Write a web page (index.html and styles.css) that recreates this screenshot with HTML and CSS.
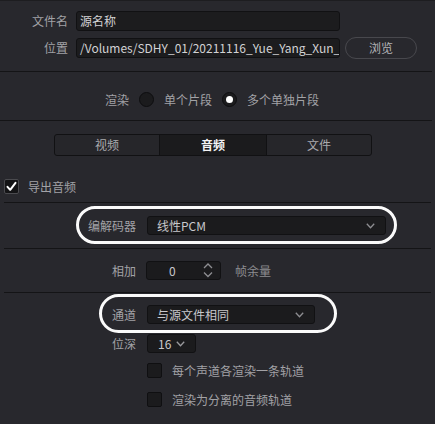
FILE: index.html
```html
<!DOCTYPE html>
<html lang="zh-CN">
<head>
<meta charset="utf-8">
<link rel="stylesheet" href="styles.css">
</head>
<body>
<div class="panel">
  <div class="file-section">
    <div class="frow">
      <span class="flabel">文件名</span>
      <div class="field wide">源名称</div>
    </div>
    <div class="frow">
      <span class="flabel">位置</span>
      <div class="field wide path">/Volumes/SDHY_01/20211116_Yue_Yang_Xun_I</div>
      <div class="browse">浏览</div>
    </div>
  </div>
  <div class="sep full first"></div>
  <div class="render-row">
    <span class="label">渲染</span>
    <span class="radio"></span>
    <span class="label">单个片段</span>
    <span class="radio on"><span class="dot"></span></span>
    <span class="label">多个单独片段</span>
  </div>
  <div class="sep full"></div>
  <div class="tabs-wrap">
    <div class="tabs">
      <div class="tab t1">视频</div>
      <div class="tab t2 active">音频</div>
      <div class="tab t3">文件</div>
    </div>
  </div>
  <div class="export-row">
    <span class="check on">
      <svg width="13" height="13" viewBox="0 0 13 13"><polyline points="2.5,6.8 5.2,9.8 10.5,2.8" fill="none" stroke="#fff" stroke-width="2" stroke-linecap="round" stroke-linejoin="round"/></svg>
    </span>
    <span class="label">导出音频</span>
  </div>
  <div class="sep inset"></div>
  <div class="codec-row">
    <div class="row">
      <span class="rlabel">编解码器</span>
      <div class="select codec">
        <span>线性PCM</span>
        <svg class="chev" width="9" height="6" viewBox="0 0 9 6"><polyline points="0.8,0.8 4.5,4.8 8.2,0.8" fill="none" stroke="#8e8e92" stroke-width="1.3"/></svg>
      </div>
    </div>
    <div class="ring ring-codec"></div>
  </div>
  <div class="sep inset"></div>
  <div class="add-row">
    <div class="row">
      <span class="rlabel">相加</span>
      <div class="spin">
        <span class="spin-val">0</span>
        <svg class="spin-arrows" width="10" height="15" viewBox="0 0 10 15"><polyline points="1,5 5,1 9,5" fill="none" stroke="#8e8e92" stroke-width="1.3"/><polyline points="1,9.5 5,13.5 9,9.5" fill="none" stroke="#8e8e92" stroke-width="1.3"/></svg>
      </div>
      <span class="label after">帧余量</span>
    </div>
  </div>
  <div class="sep inset"></div>
  <div class="channel-section">
    <div class="row">
      <span class="rlabel">通道</span>
      <div class="select channel">
        <span>与源文件相同</span>
        <svg class="chev" width="9" height="6" viewBox="0 0 9 6"><polyline points="0.8,0.8 4.5,4.8 8.2,0.8" fill="none" stroke="#8e8e92" stroke-width="1.3"/></svg>
      </div>
    </div>
    <div class="row depth">
      <span class="rlabel">位深</span>
      <div class="select bits">
        <span>16</span>
        <svg class="chev" width="9" height="6" viewBox="0 0 9 6"><polyline points="0.8,0.8 4.5,4.8 8.2,0.8" fill="none" stroke="#9a9a9e" stroke-width="1.3"/></svg>
      </div>
    </div>
    <div class="opt opt1">
      <span class="check"></span>
      <span class="label">每个声道各渲染一条轨道</span>
    </div>
    <div class="opt opt2">
      <span class="check"></span>
      <span class="label">渲染为分离的音频轨道</span>
    </div>
    <div class="ring ring-channel"></div>
  </div>
</div>
</body>
</html>
```

FILE: styles.css
```css
* { box-sizing: border-box; }
html, body {
  margin: 0;
  padding: 0;
  background: #28282d;
}
body {
  width: 435px;
  height: 424px;
  overflow: hidden;
  font-family: "Noto Sans CJK SC", "Noto Sans", sans-serif;
  font-size: 12px;
  color: #9c9ca0;
}
.panel {
  border-top: 1px solid #1d1d20;
}
.file-section {
  padding-top: 10px;
}
.frow {
  display: flex;
  align-items: center;
  height: 20px;
}
.frow + .frow {
  margin-top: 6px;
  height: 22px;
}
.flabel {
  width: 68px;
  text-align: right;
  margin-right: 8px;
  color: #a2a2a6;
  line-height: 20px;
}
.field {
  height: 20px;
  background: #1c1c1e;
  border: 1px solid #111113;
  border-radius: 3px;
  color: #d2d2d4;
  line-height: 18px;
  padding-left: 3px;
  white-space: nowrap;
  overflow: hidden;
}
.wide { width: 264px; }
.browse {
  margin-left: 5px;
  width: 72px;
  height: 22px;
  border: 1px solid #48484d;
  border-radius: 11px;
  text-align: center;
  line-height: 20px;
  color: #b4b4b8;
}
.sep {
  height: 1px;
  background: #141416;
}
.sep.full { width: 432px; }
.sep.first { margin-top: 12px; }
.sep.inset { margin: 0 4px; }

.render-row {
  display: flex;
  align-items: center;
  height: 48px;
  padding: 20px 0 13px 105px;
}
.render-row .label { line-height: 15px; color: #a2a2a6; }
.radio {
  width: 15px;
  height: 15px;
  border-radius: 50%;
  background: #1b1b1d;
  border: 1px solid #0d0d0f;
  margin: 0 10px 0 10px;
  display: flex;
  align-items: center;
  justify-content: center;
}
.render-row .radio:first-of-type { margin-left: 11px; }
.radio .dot {
  width: 7px;
  height: 7px;
  border-radius: 50%;
  background: #fff;
}

.tabs-wrap {
  padding: 13px 0 0 54px;
}
.tabs {
  display: flex;
  width: 318px;
  height: 22px;
  border: 1px solid #111113;
  border-radius: 3px;
  overflow: hidden;
  background: #26262a;
}
.tab {
  text-align: center;
  line-height: 20px;
  color: #aaaaae;
}
.t1 { width: 104px; }
.t2 { width: 108px; border-left: 1px solid #111113; border-right: 1px solid #111113; }
.t3 { flex: 1; }
.tab.active {
  background: #1b1b1d;
  color: #f4f4f6;
  font-weight: bold;
}

.export-row {
  display: flex;
  align-items: center;
  padding: 23px 0 0 4px;
  height: 38px;
}
.export-row .label { margin-left: 9px; color: #a2a2a6; line-height: 15px; }
.check {
  width: 15px;
  height: 15px;
  background: #1b1b1d;
  border: 1px solid #0f0f11;
  border-radius: 2px;
  display: flex;
  align-items: center;
  justify-content: center;
}
.check.on {
  background: #141416;
  border-color: #4a4a4e;
}
.export-row + .sep { margin-top: 8px; }

.row {
  display: flex;
  align-items: center;
  height: 19px;
}
.rlabel {
  width: 136px;
  text-align: right;
  margin-right: 11px;
  color: #a2a2a6;
}
.select {
  height: 19px;
  background: #1b1b1d;
  border: 1px solid #111113;
  border-radius: 3px;
  display: flex;
  align-items: center;
  justify-content: space-between;
  padding: 0 10px 0 9px;
  color: #c8c8cc;
}
.codec { width: 239px; }
.channel { width: 168px; }
.bits { width: 49px; padding: 0 10px 0 10px; }

.codec-row {
  position: relative;
  padding: 13px 0 13px;
}
.ring {
  position: absolute;
  border: 3px solid #fbfbfb;
  border-radius: 20px;
  pointer-events: none;
}
.ring-codec {
  left: 76px;
  top: 3px;
  width: 321px;
  height: 38px;
}

.add-row {
  padding: 12px 0 12px;
}
.spin {
  width: 75px;
  height: 19px;
  background: #1b1b1d;
  border: 1px solid #111113;
  border-radius: 3px;
  display: flex;
  align-items: center;
  padding-left: 22px;
  margin-left: -1px;
  color: #c8c8cc;
}
.spin-val { width: 34px; }
.after { margin-left: 14px; color: #8c8c90; }

.channel-section {
  position: relative;
  padding-top: 12px;
}
.depth { margin-top: 10px; }
.opt {
  display: flex;
  align-items: center;
  height: 15px;
  padding-left: 147px;
}
.opt1 { margin-top: 10px; }
.opt2 { margin-top: 14px; }
.opt .label { margin-left: 10px; color: #a2a2a6; line-height: 15px; }
.ring-channel {
  left: 99px;
  top: 1px;
  width: 238px;
  height: 39px;
}
```
